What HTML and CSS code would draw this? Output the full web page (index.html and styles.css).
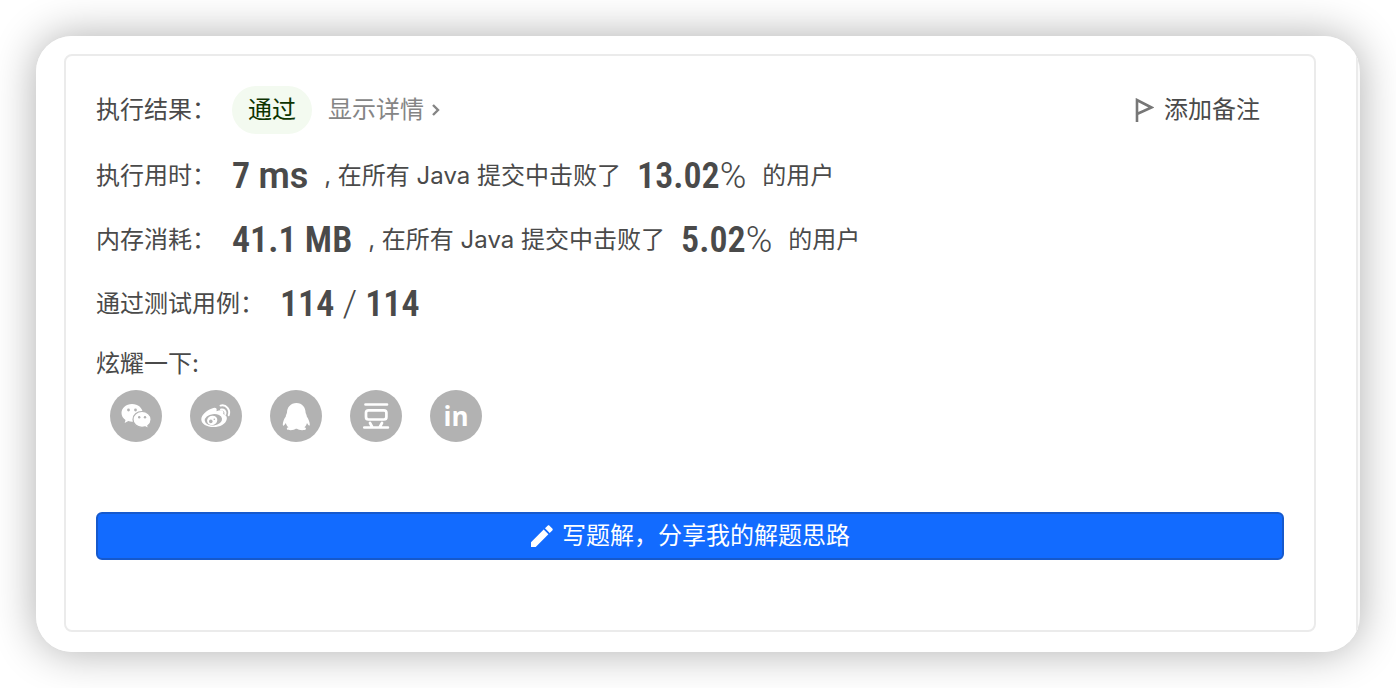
FILE: index.html
```html
<!DOCTYPE html>
<html lang="zh-CN">
<head>
  <meta charset="UTF-8">
  <title>执行结果</title>
  <link rel="stylesheet" href="styles.css">
</head>
<body>

  <div class="window">
    <div class="pane">
      <div class="result">

        <div class="status">
          <span>执行结果：</span>
          <span class="badge">通过</span>
          <a href="#" class="detail">显示详情
            <svg width="10" height="14" viewBox="0 0 10 14"><path d="M2 2l5 5-5 5" fill="none" stroke="currentColor" stroke-width="2.4"/></svg>
          </a>
          <button type="button" class="note">
            <svg width="20" height="24" viewBox="0 0 20 24"><path d="M3 24V2l14.500 7.500L3 16" fill="none" stroke="#777" stroke-width="2.600"/></svg>
            添加备注
          </button>
        </div>

        <div class="row">
          <span>执行用时：</span>
          <span class="value">7 <span class="unit">ms</span></span>
          <span>, 在所有 Java 提交中击败了</span>
          <span class="value">13.02<span class="light">%</span></span>
          <span>的用户</span>
        </div>

        <div class="row">
          <span>内存消耗：</span>
          <span class="value">41.1 MB</span>
          <span>, 在所有 Java 提交中击败了</span>
          <span class="value">5.02<span class="light">%</span></span>
          <span>的用户</span>
        </div>

        <div class="row">
          <span>通过测试用例：</span>
          <span class="value">114 <span class="light">/</span> 114</span>
        </div>

        <div class="share-title">炫耀一下:</div>
        <div class="share">
          <a href="#" aria-label="微信">
            <svg viewBox="0 0 52 52">
              <path fill="#fff" d="M22 14c-6 0-10.500 4-10.500 9 0 3 1.500 5.300 4 7l-.8 3 3.600-1.900c1.200.4 2.600.6 4 .6 6 0 10.400-3.900 10.400-8.800S28 14 22 14z"/>
              <path fill="#fff" stroke="#b2b2b2" stroke-width="1.200" d="M32 21.500c-5 0-9 3.400-9 7.900s4 7.900 9 7.900c1.100 0 2.200-.2 3.200-.5l3.400 1.800-.8-2.900c2-1.500 3.300-3.700 3.300-6.300 0-4.500-4.100-7.900-9.100-7.900z"/>
              <g fill="#b2b2b2"><circle cx="18.500" cy="20" r="1.400"/><circle cx="25.500" cy="20" r="1.400"/><circle cx="29.200" cy="27.200" r="1.200"/><circle cx="35" cy="27.200" r="1.200"/></g>
            </svg>
          </a>
          <a href="#" aria-label="微博">
            <svg viewBox="0 0 52 52">
              <path fill="#fff" d="M22 18.500c3-1.300 5.500-.7 4.500 2.700 4-1.600 8.200-1.400 6.700 2.700 3 1 4 2.700 3.600 5-.8 5-7 8.200-13.200 8.200-6.800 0-12.300-3-12.300-7.800 0-4.300 5.500-9 10.700-10.800z"/>
              <ellipse cx="23.400" cy="29.800" rx="8.700" ry="5.700" transform="rotate(-7 23.400 29.800)" fill="#b2b2b2"/>
              <ellipse cx="22.200" cy="30.400" rx="5.200" ry="4.600" transform="rotate(-20 22.200 30.400)" fill="#fff"/>
              <circle cx="20.800" cy="31.400" r="1.800" fill="#b2b2b2"/><circle cx="24.300" cy="29.200" r=".8" fill="#b2b2b2"/>
              <path d="M31 19.500c3-.6 5 1.700 4.300 4.500M30.500 15.600c5.700-1.400 10.200 4 8.200 9.600" fill="none" stroke="#fff" stroke-width="2" stroke-linecap="round"/>
            </svg>
          </a>
          <a href="#" aria-label="QQ">
            <svg viewBox="0 0 52 52">
              <path fill="#fff" d="M26.500 13c-6 0-9.500 4.500-9.500 9.500 0 1-1.200 2-1.200 4-2 2.700-3 5.700-3 8 0 1.300.7 1.500 1.300.8.600-.5 1.200-1.400 1.700-2.300.5 1.800 1.300 3.200 2.700 4.300-1.400.4-2 1.200-1.500 2 .8 1.300 7.500 1.200 8.800-.5h1.200c1.300 1.700 8 1.800 8.800.5.500-.8-.1-1.600-1.500-2 1.400-1.100 2.200-2.500 2.700-4.300.5.900 1 1.800 1.600 2.300.7.700 1.200.4 1.200-.8 0-2.300-1.200-5.300-3-8 0-2-1.200-3-1.200-4 0-5-3.300-9.500-9.100-9.500z"/>
            </svg>
          </a>
          <a href="#" aria-label="豆瓣">
            <svg viewBox="0 0 52 52">
              <g fill="none" stroke="#fff" stroke-width="2.700" stroke-linecap="round">
                <path d="M15.500 14.500h21.500M14.300 37.500h23.600M20 33l2.200 4M32 33l-2.200 4"/>
                <rect x="16" y="20.300" width="20.400" height="9.200" rx="2.500"/>
              </g>
            </svg>
          </a>
          <a href="#" aria-label="领英"><span class="linkedin">in</span></a>
        </div>

        <button type="button" class="write">
          <svg width="24" height="24" viewBox="0 0 24 24"><path fill="currentColor" d="M1 18.300V23h4.700L18.400 10.300l-4.700-4.700zM22.300 6.400c.6-.6.6-1.300 0-1.900l-2.800-2.800c-.6-.6-1.300-.6-1.900 0l-2.600 2.600L19.700 9z"/></svg>
          写题解，分享我的解题思路
        </button>

      </div>
    </div>
  </div>

</body>
</html>
```

FILE: styles.css
```css
* {
  box-sizing: border-box;
}
body {
  margin: 0;
  padding: 36px;
  background: #fff;
  color: #4a4a4a;
  font-family: Inter, "Noto Sans CJK SC", sans-serif;
  font-size: 24px;
  line-height: 36px;
}
button {
  font: inherit;
  cursor: pointer;
}
a {
  color: inherit;
  text-decoration: none;
}
.window {
  overflow: hidden;
  border-radius: 36px;
  background: #fafafa;
  box-shadow: 0 0 44px rgba(0,0,0,0.32);
}
.pane {
  margin-right: 2px;
  padding: 18px 40px 20px 28px;
  border-right: 2px solid #ebebeb;
  background: #fff;
}
.result {
  padding: 30px 30px 70px;
  border: 2px solid #ebebeb;
  border-radius: 8px;
}
.status {
  display: flex;
  align-items: center;
  gap: 16px;
  margin-bottom: 10px;
}
.badge {
  padding: 6px 16px;
  border-radius: 24px;
  background: #f3faf0;
  color: #0d3300;
}
.detail {
  display: flex;
  align-items: center;
  gap: 7px;
  color: #858585;
}
.note {
  display: flex;
  align-items: center;
  gap: 10px;
  margin-left: auto;
  padding: 0 24px 0 0;
  border: none;
  background: none;
  color: #4a4a4a;
}
.row {
  display: flex;
  align-items: center;
  gap: 16px;
  height: 64px;
}
.value {
  font-family: "Roboto Condensed", Roboto, sans-serif;
  font-size: 36px;
  font-weight: 600;
}
.unit {
  font-family: Roboto, sans-serif;
}
.light {
  font-family: Roboto, sans-serif;
  font-weight: 300;
}
.share-title {
  margin: 10px 0 8px;
}
.share {
  display: flex;
  gap: 28px;
  padding-left: 14px;
  margin-bottom: 70px;
}
.share a {
  display: flex;
  align-items: center;
  justify-content: center;
  width: 52px;
  height: 52px;
  border-radius: 50%;
  background: #b2b2b2;
}
.linkedin {
  color: #fff;
  font-family: "Open Sans", sans-serif;
  font-size: 26px;
  font-weight: bold;
}
.write {
  display: flex;
  align-items: center;
  justify-content: center;
  gap: 8px;
  width: 100%;
  height: 48px;
  border: 2px solid #1659cc;
  border-radius: 6px;
  background: #126bff;
  color: #fff;
}
```
